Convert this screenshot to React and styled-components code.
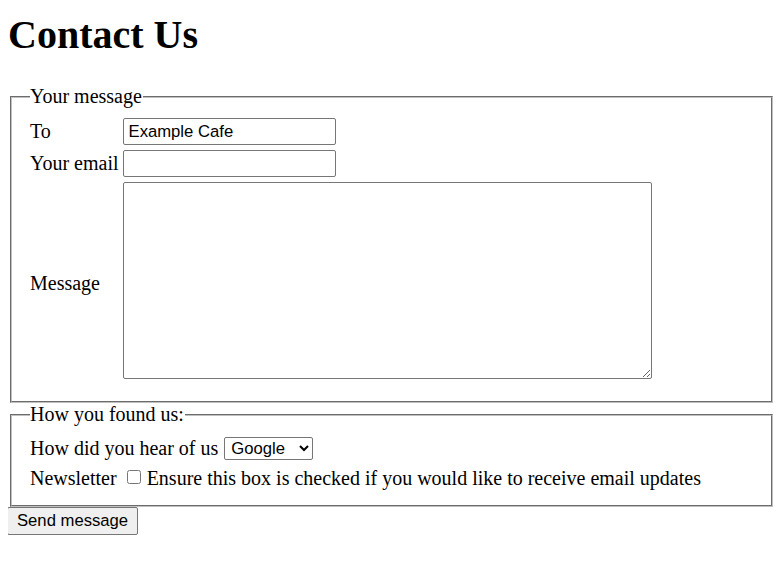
import React from 'react';
import styled, { createGlobalStyle } from 'styled-components';

const GlobalStyle = createGlobalStyle`
  body {
    margin: 8px;
    font-family: 'Liberation Serif', 'Times New Roman', serif;
    font-size: 20px;
    color: #000;
    background: #fff;
  }
`;

const Title = styled.h1`
  font-size: 40px;
  font-weight: bold;
  margin: 3px 0 27px;
`;

const Fieldset = styled.fieldset`
  margin: 0 2px;
  padding: 6px 12px 10px;
  border: 2px groove #c0c0c0;
  min-width: min-content;
`;

const Legend = styled.legend`
  margin-left: 6px;
  padding: 0 1px 0 0;
`;

const FieldGrid = styled.div`
  display: grid;
  grid-template-columns: max-content max-content;
  column-gap: 4px;
  row-gap: 5px;
  align-items: center;
  padding: 4px 6px 12px;
`;

const Label = styled.label`
  display: block;
  padding-top: ${(p) => (p.$tall ? '5px' : '0')};
`;

const TextInput = styled.input`
  box-sizing: border-box;
  width: 213px;
  height: 27px;
  margin: 0;
  padding: 1px 5px;
  font-family: 'Liberation Sans', Arial, sans-serif;
  font-size: 16.67px;
  border: 1px solid #767676;
  border-radius: 2px;
`;

const TextArea = styled.textarea`
  box-sizing: border-box;
  width: 529px;
  height: 197px;
  margin: 0;
  font-family: 'Liberation Mono', monospace;
  font-size: 16px;
  border: 1px solid #767676;
  border-radius: 2px;
`;

const Rows = styled.div`
  display: flex;
  flex-direction: column;
  gap: 7px;
  padding: 5px 6px 5px;
`;

const Row = styled.div`
  display: flex;
  align-items: center;
  white-space: nowrap;
`;

const Select = styled.select`
  box-sizing: border-box;
  width: 89px;
  height: 23px;
  margin-left: 6px;
  padding: 0 2px;
  font-family: 'Liberation Sans', Arial, sans-serif;
  font-size: 16.67px;
  border: 1px solid #767676;
  border-radius: 2px;
  background: #fff;
  color: #000;
`;

const Checkbox = styled.input`
  width: 14px;
  height: 14px;
  margin: 0 6px 3px 10px;
`;

const SendButton = styled.button`
  margin: 0 0 0 -1px;
  height: 28px;
  padding: 1px 9px;
  font-family: 'Liberation Sans', Arial, sans-serif;
  font-size: 16.67px;
  color: #000;
  background: #efefef;
  border: 1px solid #767676;
  border-radius: 2px;
`;

export default function App() {
  return (
    <>
      <GlobalStyle />
      <Title>Contact Us</Title>
      <form onSubmit={(e) => e.preventDefault()}>
        <Fieldset>
          <Legend>Your message</Legend>
          <FieldGrid>
            <Label htmlFor="to">To</Label>
            <TextInput id="to" type="text" defaultValue="Example Cafe" />
            <Label htmlFor="email">Your email</Label>
            <TextInput id="email" type="email" />
            <Label htmlFor="message" $tall>Message</Label>
            <TextArea id="message" />
          </FieldGrid>
        </Fieldset>
        <Fieldset>
          <Legend>How you found us:</Legend>
          <Rows>
            <Row>
              How did you hear of us
              <Select defaultValue="google">
                <option value="google">Google</option>
                <option value="friend">A friend</option>
                <option value="other">Other</option>
              </Select>
            </Row>
            <Row>
              Newsletter
              <Checkbox type="checkbox" />
              Ensure this box is checked if you would like to receive email updates
            </Row>
          </Rows>
        </Fieldset>
        <SendButton type="submit">Send message</SendButton>
      </form>
    </>
  );
}
